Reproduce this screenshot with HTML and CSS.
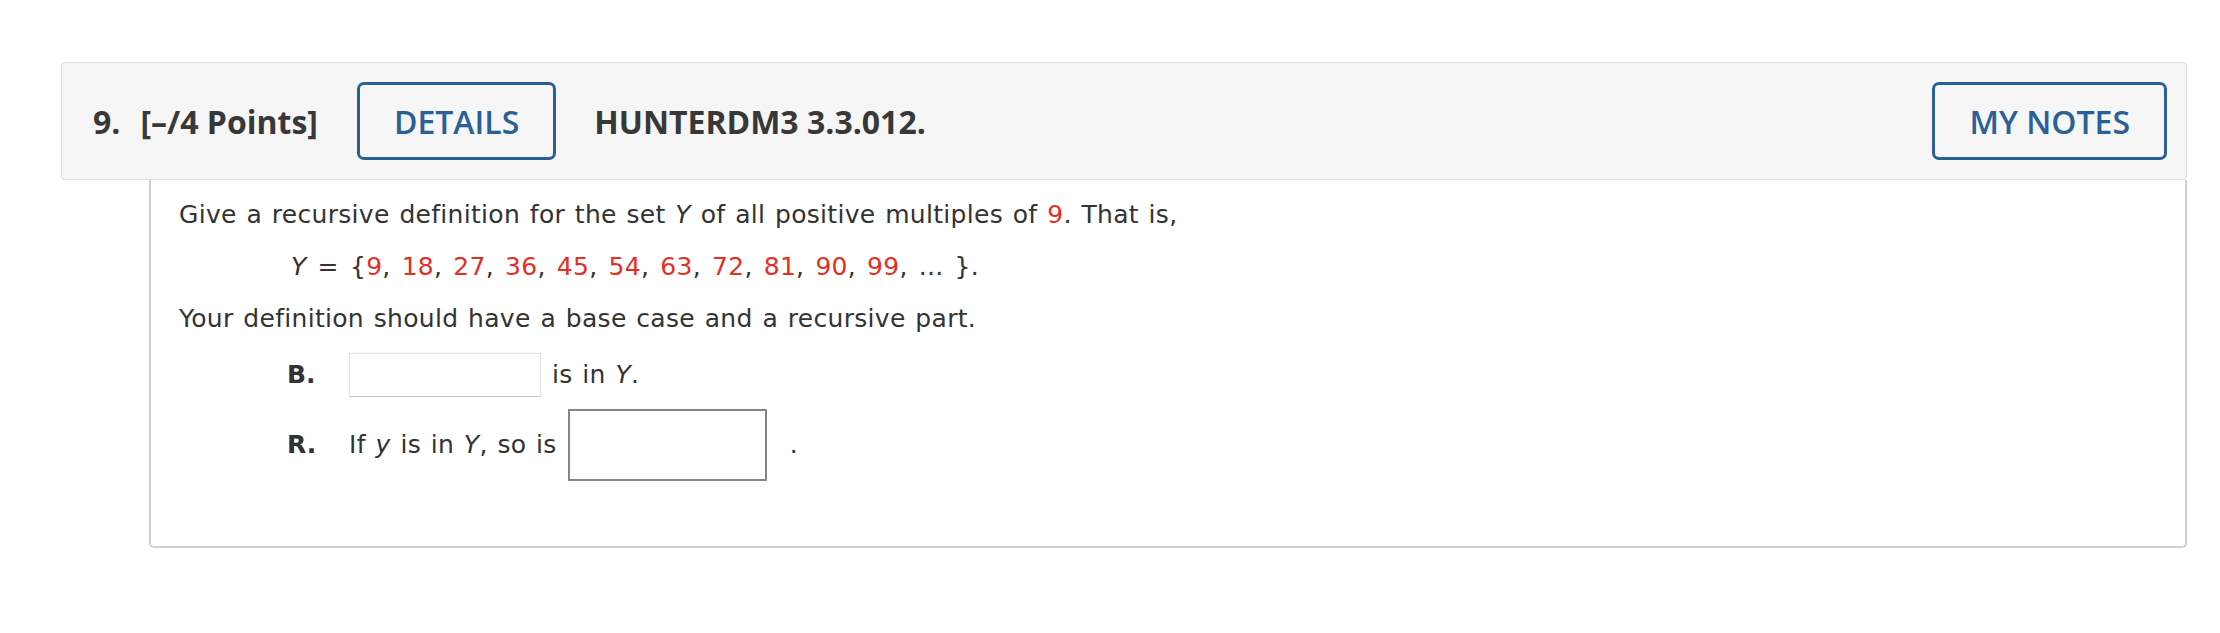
FILE: index.html
```html
<!DOCTYPE html>
<html lang="en">
<head>
    <meta charset="UTF-8">
    <title>HUNTERDM3 3.3.012.</title>
    <link rel="stylesheet" href="styles.css">
</head>
<body>

    <div class="question">
        <div class="q-header">
            <span class="q-num">9.</span>
            <span class="q-points">[–/4 Points]</span>
            <button class="btn btn-details">DETAILS</button>
            <span class="q-title">HUNTERDM3 3.3.012.</span>
            <button class="btn btn-notes">MY NOTES</button>
        </div>

        <div class="q-body">
            <p>Give a recursive definition for the set <i>Y</i> of all positive multiples of <span class="red">9</span>. That is,</p>
            <p class="set">
                <i>Y</i> = {<span class="red">9</span>, <span class="red">18</span>, <span class="red">27</span>, <span class="red">36</span>, <span class="red">45</span>, <span class="red">54</span>, <span class="red">63</span>, <span class="red">72</span>, <span class="red">81</span>, <span class="red">90</span>, <span class="red">99</span>, ... }.
            </p>
            <p>Your definition should have a base case and a recursive part.</p>

            <div class="answers">
                <div class="row">
                    <b class="label">B.</b>
                    <input type="text" class="ans-base">
                    <span class="txt after">is in <i>Y</i>.</span>
                </div>
                <div class="row">
                    <b class="label">R.</b>
                    <span class="txt">If <i>y</i> is in <i>Y</i>, so is</span>
                    <input type="text" class="ans-rec">
                    <span class="txt dot">.</span>
                </div>
            </div>
        </div>
    </div>

</body>
</html>
```

FILE: styles.css
```css
/* question card */
body {
    margin: 62px 33px 0 61px;
    background-color: #ffffff;
    color: #333;
    font-family: "DejaVu Sans", Verdana, sans-serif;
}
.q-header {
    display: flex;
    align-items: center;
    background-color: #f6f6f6;
    border: 1px solid #dcdcdc;
    border-radius: 4px;
    padding: 19px 19px 19px 31px;
    font-family: "Open Sans", "Liberation Sans", sans-serif;
    font-size: 32px;
    font-weight: 700;
    color: #383838;
}
.q-num {
    margin-right: 20px;
}
.q-title {
    margin-left: 38px;
}
.btn {
    font-family: "Open Sans", "Liberation Sans", sans-serif;
    font-size: 32px;
    font-weight: 600;
    color: #2b6096;
    background-color: transparent;
    border: 3px solid #2b6096;
    border-radius: 7px;
    height: 78px;
    padding: 0 34px;
    box-sizing: border-box;
    cursor: pointer;
}
.btn-details {
    margin-left: 39px;
}
.btn-notes {
    margin-left: auto;
}
.q-body {
    margin-left: 88px;
    border: 2px solid #cfcfcf;
    border-top: none;
    border-radius: 0 0 5px 5px;
    padding: 17px 28px 65px 28px;
    font-size: 25px;
    line-height: 36px;
    letter-spacing: 0.3px;
    word-spacing: 1.5px;
}
.q-body p {
    margin: 0 0 16px 0;
}
.q-body .set {
    padding-left: 112px;
    word-spacing: 2.8px;
}
.red {
    color: #e62e24;
}
.answers {
    display: flex;
    flex-direction: column;
    gap: 12px;
    padding-left: 108px;
}
.row {
    display: flex;
    align-items: center;
}
.label {
    width: 62px;
    letter-spacing: 0;
}
.after {
    margin-left: 11px;
}
.dot {
    margin-left: 23px;
}
input {
    box-sizing: border-box;
    background-color: #fff;
    margin: 0;
}
.ans-base {
    width: 192px;
    height: 44px;
    border: 1px solid #e2e2e2;
    border-bottom-color: #c8c8c8;
}
.ans-rec {
    width: 199px;
    height: 72px;
    margin-left: 11px;
    border: 2px solid #858585;
}
```
